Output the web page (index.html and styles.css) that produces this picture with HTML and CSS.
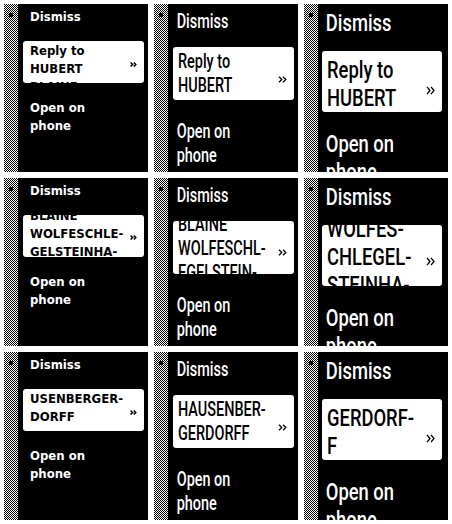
FILE: index.html
```html
<!DOCTYPE html>
<html>
<head>
<meta charset="utf-8">
<link rel="stylesheet" href="styles.css">
</head>
<body>
<main class="grid">
  <section class="cell s1">
    <div class="strip"><span class="dot"></span></div>
    <div class="menu">
      <div class="item">Dismiss</div>
      <div class="box"><div class="lines">Reply to<br>HUBERT<br>BLAINE</div><svg class="chev" viewBox="0 0 7 5"><path d="M0.6 0.5L2.6 2.5L0.6 4.5M3.8 0.5L5.8 2.5L3.8 4.5"/></svg></div>
      <div class="item open">Open on<br>phone</div>
    </div>
  </section>
  <section class="cell s2">
    <div class="strip"><span class="dot"></span></div>
    <div class="menu">
      <div class="item">Dismiss</div>
      <div class="box"><div class="lines">Reply to<br>HUBERT</div><svg class="chev" viewBox="0 0 9 7"><path d="M1 0.7L3.8 3.5L1 6.3M5 0.7L7.8 3.5L5 6.3"/></svg></div>
      <div class="item open">Open on<br>phone</div>
    </div>
  </section>
  <section class="cell s3">
    <div class="strip"><span class="dot"></span></div>
    <div class="menu">
      <div class="item">Dismiss</div>
      <div class="box"><div class="lines">Reply to<br>HUBERT</div><svg class="chev" viewBox="0 0 9 9"><path d="M1 0.8L4 4.5L1 8.2M5 0.8L8 4.5L5 8.2"/></svg></div>
      <div class="item open">Open on<br>phone</div>
    </div>
  </section>

  <section class="cell s1">
    <div class="strip"><span class="dot"></span></div>
    <div class="menu">
      <div class="item">Dismiss</div>
      <div class="box scroll"><div class="lines">BLAINE<br>WOLFESCHLE-<br>GELSTEINHA-</div><svg class="chev" viewBox="0 0 7 5"><path d="M0.6 0.5L2.6 2.5L0.6 4.5M3.8 0.5L5.8 2.5L3.8 4.5"/></svg></div>
      <div class="item open">Open on<br>phone</div>
    </div>
  </section>
  <section class="cell s2">
    <div class="strip"><span class="dot"></span></div>
    <div class="menu">
      <div class="item">Dismiss</div>
      <div class="box scroll"><div class="lines">BLAINE<br>WOLFESCHL-<br>EGELSTEIN-</div><svg class="chev" viewBox="0 0 9 7"><path d="M1 0.7L3.8 3.5L1 6.3M5 0.7L7.8 3.5L5 6.3"/></svg></div>
      <div class="item open">Open on<br>phone</div>
    </div>
  </section>
  <section class="cell s3">
    <div class="strip"><span class="dot"></span></div>
    <div class="menu">
      <div class="item">Dismiss</div>
      <div class="box scroll"><div class="lines">WOLFES-<br>CHLEGEL-<br>STEINHA-</div><svg class="chev" viewBox="0 0 9 9"><path d="M1 0.8L4 4.5L1 8.2M5 0.8L8 4.5L5 8.2"/></svg></div>
      <div class="item open">Open on<br>phone</div>
    </div>
  </section>

  <section class="cell s1">
    <div class="strip"><span class="dot"></span></div>
    <div class="menu">
      <div class="item">Dismiss</div>
      <div class="box"><div class="lines">USENBERGER-<br>DORFF</div><svg class="chev" viewBox="0 0 7 5"><path d="M0.6 0.5L2.6 2.5L0.6 4.5M3.8 0.5L5.8 2.5L3.8 4.5"/></svg></div>
      <div class="item open">Open on<br>phone</div>
    </div>
  </section>
  <section class="cell s2">
    <div class="strip"><span class="dot"></span></div>
    <div class="menu">
      <div class="item">Dismiss</div>
      <div class="box"><div class="lines">HAUSENBER-<br>GERDORFF</div><svg class="chev" viewBox="0 0 9 7"><path d="M1 0.7L3.8 3.5L1 6.3M5 0.7L7.8 3.5L5 6.3"/></svg></div>
      <div class="item open">Open on<br>phone</div>
    </div>
  </section>
  <section class="cell s3">
    <div class="strip"><span class="dot"></span></div>
    <div class="menu">
      <div class="item">Dismiss</div>
      <div class="box"><div class="lines">GERDORF-<br>F</div><svg class="chev" viewBox="0 0 9 9"><path d="M1 0.8L4 4.5L1 8.2M5 0.8L8 4.5L5 8.2"/></svg></div>
      <div class="item open">Open on<br>phone</div>
    </div>
  </section>
</main>
</body>
</html>
```

FILE: styles.css
```css
* {
  box-sizing: border-box;
  margin: 0;
  padding: 0;
}

html,
body {
  background: #fff;
}

body {
  width: 452px;
  height: 524px;
  overflow: hidden;
}

.grid {
  display: grid;
  grid-template-columns: repeat(3, 144px);
  grid-template-rows: repeat(3, 168px);
  gap: 6px;
  padding: 4px;
}

.cell {
  background: #000;
  color: #fff;
  display: flex;
  overflow: hidden;
}

.strip {
  position: relative;
  flex: none;
  width: 14px;
  background: repeating-conic-gradient(#fff 0 25%, #000 0 50%) 0 0 / 2px 2px;
}

.dot {
  position: absolute;
  left: 5px;
  top: 9px;
  width: 4px;
  height: 4px;
  background: #000;
  border-radius: 1px;
}

.menu {
  flex: 1;
  display: flex;
  flex-direction: column;
  min-width: 0;
}

.item,
.lines {
  white-space: nowrap;
}

.box {
  flex: none;
  display: flex;
  background: #fff;
  color: #000;
  overflow: hidden;
  border-radius: 3px;
}

.lines {
  flex: 1;
  align-self: flex-start;
  min-width: 0;
}

.chev {
  flex: none;
  align-self: center;
  fill: none;
  stroke: #000;
}

/* small bold */
.s1 {
  font: bold 13px/18px "DejaVu Sans Condensed", "DejaVu Sans", sans-serif;
}

.s1 .menu {
  padding: 4px 0 0 5px;
}

.s1 .item {
  padding-left: 7px;
}

.s1 .box {
  margin: 15px 4px 0 0;
  height: 42px;
  padding: 1px 0 0 7px;
}

.s1 .box.scroll {
  padding-top: 0;
}

.s1 .box.scroll .lines {
  margin-top: -8px;
}

.s1 .chev {
  width: 7px;
  height: 5px;
  margin: 3px 7px 0 0;
  stroke-width: 1.5;
}

.s1 .open {
  margin-top: 16px;
}

/* medium */
.s2 {
  font: 500 19.5px/24px Roboto, "Liberation Sans", sans-serif;
}

.s2 .item,
.s2 .lines {
  transform: scaleX(0.74);
  transform-origin: 0 0;
}

.s2 .menu {
  padding: 6px 0 0 5px;
}

.s2 .item {
  padding-left: 5px;
}

.s2 .box {
  margin: 13px 4px 0 0;
  height: 53px;
  padding: 3px 0 0 5px;
}

.s2 .box.scroll {
  padding-top: 0;
}

.s2 .box.scroll .lines {
  margin-top: -8px;
}

.s2 .chev {
  width: 9px;
  height: 7px;
  margin: 9px 7px 0 0;
  stroke-width: 1.3;
}

.s2 .open {
  margin-top: 20px;
}

/* large */
.s3 {
  font: 500 24.5px/28px Roboto, "Liberation Sans", sans-serif;
}

.s3 .item,
.s3 .lines {
  transform: scaleX(0.75);
  transform-origin: 0 0;
}

.s3 .menu {
  padding: 5px 0 0 4px;
}

.s3 .item {
  padding-left: 5px;
}

.s3 .box {
  margin: 14px 6px 0 0;
  height: 61px;
  padding: 5px 0 0 5px;
}

.s3 .box.scroll {
  padding-top: 0;
}

.s3 .box.scroll .lines {
  margin-top: -10px;
}

.s3 .chev {
  width: 9px;
  height: 9px;
  margin: 12px 7px 0 0;
  stroke-width: 1.3;
}

.s3 .open {
  margin-top: 18px;
}
```
